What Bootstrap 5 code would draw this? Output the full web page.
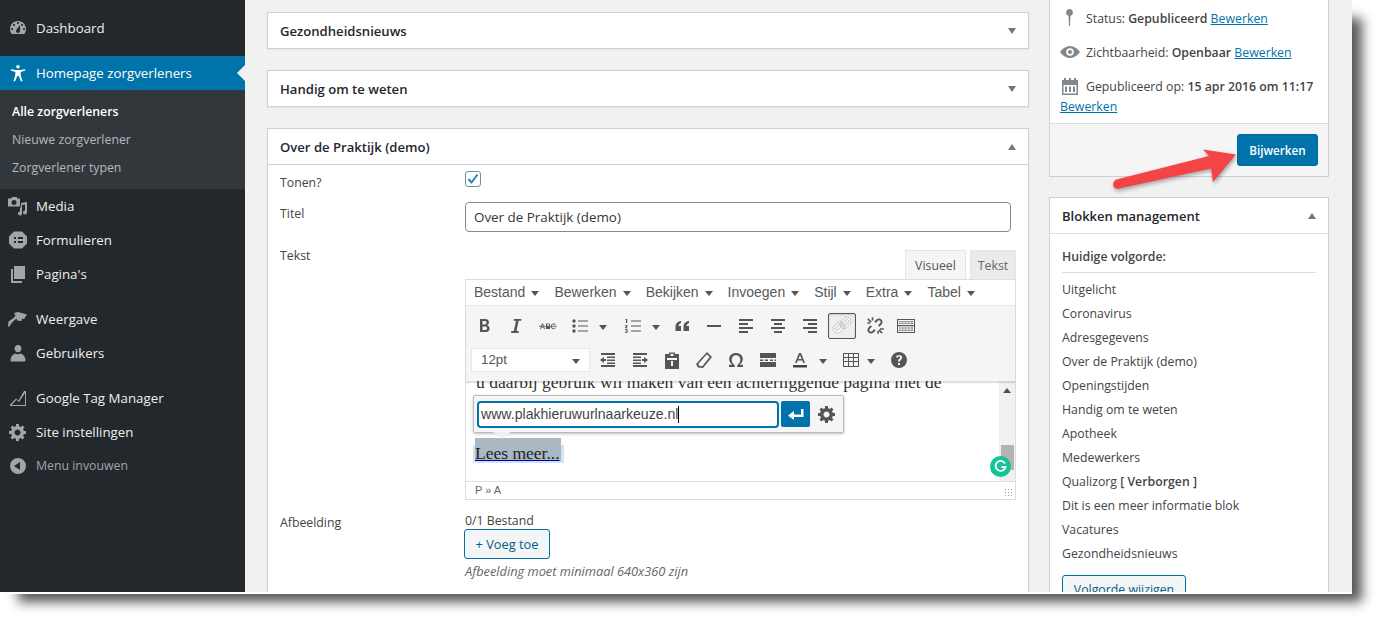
<!DOCTYPE html>
<html lang="nl">
<head>
<meta charset="utf-8">
<title>Homepage zorgverleners</title>
<link href="https://cdn.jsdelivr.net/npm/bootstrap@5.3.0/dist/css/bootstrap.min.css" rel="stylesheet">
<style>
html,body{height:624px;overflow:hidden;background:#fff}
body{font-family:"Open Sans","Noto Sans",sans-serif;font-size:12.3px;line-height:20px;color:#444}
.shot{width:1352px;height:592px;overflow:hidden;background:#f1f1f1;box-shadow:0 2px 0 #fff,14px 14px 11px -4px rgba(0,0,0,.66);position:relative}
.side{width:245px;flex:none;background:#23282d;padding-top:11px;height:592px}
.mi{height:34px;font-size:13.3px;color:#eee;padding-left:8px;gap:8px}
.mi svg{width:20px;height:20px;fill:#a0a5aa;flex:none}
.mi.act{background:#0073aa;color:#fff;position:relative}
.mi.act svg{fill:#fff}
.mi.act::after{content:"";position:absolute;right:0;top:9px;border:8px solid transparent;border-right-color:#f1f1f1;border-left-width:0}
.mi.mute{color:#a0a5aa;font-size:12.3px}
.msep{height:11px}
.sub{background:#32373c;padding:8px 0 7px;height:99px}
.sub div{height:28px;line-height:28px;padding-left:12px;color:#b4b9be;font-size:12.3px}
.sub .on{color:#fff;font-weight:600}
.colm{width:762px;flex:none;margin-left:22px;padding-top:12px}
.colr{width:280px;flex:none;margin-left:20px}
.mbox{background:#fff;border:1px solid #ccd0d4;box-shadow:0 1px 1px rgba(0,0,0,.04);margin-bottom:21px}
.mhead{height:35px;padding:0 12px;font-size:13.1px;font-weight:600;color:#23282d}
.mhead.lined{border-bottom:1px solid #ccd0d4;height:36px}
.tri{width:0;height:0;border-left:4.5px solid transparent;border-right:4.5px solid transparent}
.tri.dn{border-top:6px solid #72777c}
.tri.up{border-bottom:6px solid #72777c}
.frow{display:flex}
.flabel{width:197px;flex:none;padding-left:12px;color:#444}
.chk{width:16px;height:16px;border:1px solid #7e8993;border-radius:3px;background:#fff;display:block}
.chk svg{display:block;width:14px;height:14px}
.tinput{width:546px;height:30px;border:1px solid #7e8993;border-radius:4px;padding:0 8px;font-size:13.4px;line-height:28px;color:#32373c;background:#fff}
.ed{width:551px}
.tabs{height:29px;gap:4px}
.etab{height:29px;padding:0 9px;font-size:12.3px;line-height:30px;border:1px solid #e5e5e5;border-bottom:0;color:#555;background:#f5f5f5;text-align:center}
.etab.off{background:#ebebeb;color:#666;padding:0;width:46px}
.etab.vis{padding:0;width:61px}
.frame{border:1px solid #ddd;background:#fff}
.mbar{height:26px;padding:0 0 2px 8px;background:#fff;font-family:"Liberation Sans",sans-serif;font-size:14px;color:#595959;border-bottom:1px solid #e5e5e5;gap:15px}
.mbar span{display:flex;align-items:center;gap:6px}
.ca{width:0;height:0;border-left:4px solid transparent;border-right:4px solid transparent;border-top:5px solid #555;display:inline-block;margin-top:3px}
.tbar{height:75px;background:#f5f5f5;box-shadow:0 2px 1px rgba(0,0,0,.12);position:relative;z-index:2;padding-top:3px}
.trow{height:34px;display:flex;align-items:center}
.tr1{padding-left:2px}
.tr2{padding-left:5px}
.tb{width:32px;height:26px;display:flex;align-items:center;justify-content:center;flex:none;color:#555;fill:#555}
.tb svg{width:20px;height:20px;fill:#555;display:block}
.tba{width:17px;flex:none;display:flex;align-items:center;justify-content:flex-start;padding-left:3px}
.tba.tight{padding-left:0;width:16px}
.tb.tbtn-on{width:28px;height:26px;border:1px solid #555;border-radius:2px;background:#eee;box-shadow:inset 0 1px 2px rgba(0,0,0,.15);margin-left:2px}
.tb.tbtn-on svg{width:22px;height:22px;fill:#fff;stroke:#999;stroke-width:.5}
.tb.tb30{width:30px}
.tb.tb30 svg{width:22px;height:22px}
.tb.tbg{margin-left:2px}
.fsel{width:119px;height:24px;background:#fff;border:1px solid #e8e8e8;font-family:"Liberation Sans",sans-serif;font-size:13.3px;color:#555;padding:0 9px;margin-right:2px;flex:none}
.econt{height:100px;position:relative;overflow:hidden;font-family:"Liberation Serif",serif;font-size:17.5px;line-height:24px;color:#333;padding:0 10px}
.eline{margin-top:-11px;white-space:nowrap}
.scroll{position:absolute;right:0;top:0;bottom:0;width:16px;background:#f1f1f1}
.sthumb{position:absolute;left:2px;top:64px;width:13px;height:25px;background:#b4b4b4}
.sup{position:absolute;left:4px;top:7px;width:0;height:0;border-left:4px solid transparent;border-right:4px solid transparent;border-bottom:5px solid #505050}
.gram{position:absolute;left:524px;top:75px;width:21px;height:21px;border-radius:50%;background:#15c39a;display:flex;align-items:center;justify-content:center}
.lnkpop{position:absolute;left:7px;top:14px;width:371px;height:38px;background:#f5f5f5;border:1px solid #bbb;border-radius:2px;box-shadow:0 1px 3px rgba(0,0,0,.25);padding:5px 3px;gap:2px;z-index:3;font-family:"Liberation Sans",sans-serif}
.lnkpop::after{content:"";position:absolute;left:19px;top:36px;border:9px solid transparent;border-top:7px solid #f0f0f0;border-bottom:0}
.lnkin{width:302px;height:27px;border:2px solid #0073aa;border-radius:4px;background:#fff;padding:0 2px;line-height:23px;font-size:14.1px;color:#444;flex:none}
.caret{display:inline-block;width:1px;height:17px;background:#000;vertical-align:-4px}
.lnkgo{width:29px;height:26px;background:#0073aa;border-radius:2px;flex:none}
.lnkgo svg{width:20px;height:20px;fill:#fff}
.lnkgear{width:30px;height:26px;flex:none}
.lnkgear svg{width:20px;height:20px;fill:#555}
.sel{position:absolute;left:7px;top:64px;height:18px;width:91px;background:#cfe3f7}
.selg{position:absolute;left:9px;top:57px;width:86px;height:23px;background:#aab8c3}
.sela{position:absolute;left:9px;top:60px;color:#222;text-decoration:underline;text-decoration-color:#00a;line-height:24px}
.estat{height:18px;border-top:1px solid #e0e0e0;background:#fff;font-family:"Liberation Sans",sans-serif;font-size:11px;line-height:17px;color:#666;padding:0 9px;position:relative}
.grip{position:absolute;right:2px;bottom:2px;width:9px;height:9px;background-image:radial-gradient(#999 .8px,transparent .9px);background-size:3px 3px}
.addb{display:inline-block;height:30px;width:86px;border:1px solid #0071a1;border-radius:3px;background:#f3f5f6;color:#016087;font-size:12.8px;line-height:28px;text-align:center;margin-left:-1px;vertical-align:top}
.help{font-style:italic;color:#666;font-size:12.8px;line-height:20px;margin-top:2px}
.pub{background:#fff;border:1px solid #ccd0d4;border-top:0;margin-bottom:20px}
.prow{padding:0 10px;margin-bottom:13px;color:#444}
.prow svg{width:20px;height:20px;fill:#82878c;display:inline-block;vertical-align:-5px;margin-right:6px}
.prow a{color:#0073aa;text-decoration:underline}
.pfoot{height:53px;border-top:1px solid #ddd;background:#f5f5f5;padding:10px 10px 0 0}
.upd{width:81px;height:32px;background:#0073aa;border-radius:3px;color:#fff;font-size:11.7px;font-weight:600;border:1px solid #006799}
.bhead{height:36px;padding:0 12px;font-size:13px;font-weight:600;color:#23282d;border-bottom:1px solid #ddd}
.bbody{padding:13px 12px 0}
.btitle{font-weight:600;color:#444;padding-bottom:5px;border-bottom:1px solid #ddd;margin-bottom:5px}
.bli{height:24px;line-height:24px;color:#444}
.volg{display:inline-block;width:124px;height:30px;border:1px solid #0071a1;border-radius:3px;background:#f3f5f6;color:#016087;line-height:28px;text-align:center;margin-top:9px}
.pijl{position:absolute;left:1105px;top:140px;width:140px;height:58px;overflow:visible;filter:drop-shadow(1px 2px 2px rgba(0,0,0,.35))}
.r1{height:37px;padding-top:6px}
.r1 .flabel{padding-top:2px}
.r2{height:43px}
.r2 .flabel{padding-top:2px}
.r3{padding-bottom:10px}
.r3 .flabel{padding-top:1px}
.r3 .ed{padding-top:5px}
.r4{padding-bottom:40px}
.r4 .flabel{padding-top:3px}
.blok{border:1px solid #ccd0d4}
.lastp{margin-bottom:6px}
.ptop{padding-top:8px}
.bst{line-height:19px;padding-top:1px;margin-bottom:-1px}
</style>
</head>
<body>
<div class="shot d-flex">
  <aside class="side">
    <div class="mi d-flex align-items-center"><svg viewBox="0 0 20 20"><path d="M3.76 16h12.48c1.1-1.37 1.76-3.11 1.76-5 0-4.42-3.58-8-8-8s-8 3.58-8 8c0 1.89.66 3.63 1.76 5zM10 4c.55 0 1 .45 1 1s-.45 1-1 1-1-.45-1-1 .45-1 1-1zM6 6c.55 0 1 .45 1 1s-.45 1-1 1-1-.45-1-1 .45-1 1-1zm8 0c.55 0 1 .45 1 1s-.45 1-1 1-1-.45-1-1 .45-1 1-1zm-5.37 5.55L12 7v6c0 1.1-.9 2-2 2s-2-.9-2-2c0-.57.24-1.08.63-1.45zM4 10c.55 0 1 .45 1 1s-.45 1-1 1-1-.45-1-1 .45-1 1-1zm12 0c.55 0 1 .45 1 1s-.45 1-1 1-1-.45-1-1 .45-1 1-1z"/></svg><span>Dashboard</span></div>
    <div class="msep"></div>
    <div class="mi act d-flex align-items-center"><svg viewBox="0 0 20 20"><path d="M10 2a1.8 1.8 0 1 1 0 3.6A1.8 1.8 0 0 1 10 2zM3 6.200l4.900.8h4.200l4.900-.8.3 1.400-4.600 1.500v2.900l1.800 6-1.500.5-2.300-5.500h-1.400l-2.300 5.500-1.500-.5 1.800-6V9.100L2.700 7.600z"/></svg><span>Homepage zorgverleners</span></div>
    <div class="sub"><div class="on">Alle zorgverleners</div><div>Nieuwe zorgverlener</div><div>Zorgverlener typen</div></div>
    <div class="mi d-flex align-items-center"><svg viewBox="0 0 20 20"><path d="M0 2.500h3l1-1.500h4.500l1 1.500H12v8H0zm6 6.500a2.500 2.500 0 1 0 0-5 2.500 2.500 0 0 0 0 5z" fill-rule="evenodd"/><path d="M19 6v10.500a2 2 0 1 1-2-2V8.500l-3 .6V17.500a2 2 0 1 1-2-2v-4h1V7z"/></svg><span>Media</span></div>
    <div class="mi d-flex align-items-center"><svg viewBox="0 0 20 20"><path fill-rule="evenodd" d="M6 1.500h8l5 5v7l-5 5H6l-5-5v-7zM6 7v2h2V7zm4 0v2h5V7zm-4 4v2h2v-2zm4 0v2h5v-2z"/></svg><span>Formulieren</span></div>
    <div class="mi d-flex align-items-center"><svg viewBox="0 0 20 20"><path d="M6 2h11v13H6z"/><path d="M3 5h2v12h9v2H3z"/></svg><span>Pagina's</span></div>
    <div class="msep"></div>
    <div class="mi d-flex align-items-center"><svg viewBox="0 0 20 20"><path d="M6 4l4-1 9 2.500-3 4.500-2-.5-.5 2.500-4.500-.5-.5-2-4.500 4L1 18l-1-1 .5-4.500 5-3.500 2-2.500z"/></svg><span>Weergave</span></div>
    <div class="mi d-flex align-items-center"><svg viewBox="0 0 20 20"><path d="M10 9.300c2 0 3.400-1.800 3.400-3.900S12 2 10 2 6.600 3.300 6.600 5.400s1.400 3.900 3.400 3.900zM2.500 17.600c0-3.700 2-6.200 5-7 .7.500 1.600.8 2.500.8s1.800-.3 2.500-.8c3 .8 5 3.300 5 7 0 .5-.5.900-1 .9H3.500c-.5 0-1-.4-1-.9z"/></svg><span>Gebruikers</span></div>
    <div class="msep"></div>
    <div class="mi d-flex align-items-center"><svg viewBox="0 0 20 20"><path d="M2 18v-1.500l6-6 2.500 2L16 3h2v15zm1.500-1H17V5l-6 9-2.500-2.200z" fill-rule="evenodd"/></svg><span>Google Tag Manager</span></div>
    <div class="mi d-flex align-items-center"><svg viewBox="0 0 20 20"><path d="M18 12h-2.180c-.17.7-.44 1.350-.81 1.930l1.540 1.540-2.100 2.100-1.540-1.540c-.58.36-1.230.63-1.910.79V19H8v-2.180c-.68-.16-1.330-.43-1.910-.79l-1.540 1.540-2.120-2.120 1.540-1.540c-.36-.58-.63-1.230-.79-1.910H1V9.030h2.170c.16-.7.44-1.350.8-1.940L2.430 5.550l2.100-2.100 1.540 1.540c.58-.37 1.240-.64 1.930-.81V2h3v2.180c.68.16 1.330.43 1.910.79l1.540-1.540 2.120 2.120-1.540 1.540c.36.59.64 1.240.8 1.940H18V12zm-8.500 1.500c1.660 0 3-1.340 3-3s-1.340-3-3-3-3 1.340-3 3 1.340 3 3 3z"/></svg><span>Site instellingen</span></div>
    <div class="mi mute d-flex align-items-center"><svg viewBox="0 0 20 20"><path fill-rule="evenodd" d="M10 2a8 8 0 1 1 0 16 8 8 0 0 1 0-16zm2 4l-6 4 6 4z"/></svg><span>Menu invouwen</span></div>
  </aside>

  <main class="colm">
    <section class="mbox"><div class="mhead d-flex align-items-center justify-content-between"><span>Gezondheidsnieuws</span><span class="tri dn"></span></div></section>
    <section class="mbox"><div class="mhead d-flex align-items-center justify-content-between"><span>Handig om te weten</span><span class="tri dn"></span></div></section>
    <section class="mbox">
      <div class="mhead lined d-flex align-items-center justify-content-between"><span>Over de Praktijk (demo)</span><span class="tri up"></span></div>
      <div class="frow r1"><div class="flabel">Tonen?</div><div><span class="chk"><svg viewBox="0 0 14 14"><path d="M2.500 7l3 3.500 6-8" fill="none" stroke="#1e8cbe" stroke-width="2"/></svg></span></div></div>
      <div class="frow r2"><div class="flabel">Titel</div><div class="tinput">Over de Praktijk (demo)</div></div>
      <div class="frow r3"><div class="flabel">Tekst</div>
        <div class="ed">
          <div class="tabs d-flex justify-content-end"><div class="etab vis">Visueel</div><div class="etab off">Tekst</div></div>
          <div class="frame">
            <div class="mbar d-flex align-items-center"><span>Bestand <i class="ca"></i></span><span>Bewerken <i class="ca"></i></span><span>Bekijken <i class="ca"></i></span><span>Invoegen <i class="ca"></i></span><span>Stijl <i class="ca"></i></span><span>Extra <i class="ca"></i></span><span>Tabel <i class="ca"></i></span></div>
            <div class="tbar">
              <div class="trow tr1">
                <div class="tb"><svg viewBox="0 0 20 20"><path fill-rule="evenodd" d="M6 3h5c2.500 0 4 1.200 4 3.300 0 1.400-.8 2.400-2 2.900 1.600.4 2.600 1.500 2.600 3.200 0 2.400-1.800 3.600-4.400 3.600H6zm2.500 2.100v3.300h2c1.300 0 2-.6 2-1.700s-.7-1.600-2-1.600zm0 5.300V14h2.300c1.500 0 2.300-.6 2.300-1.800s-.8-1.800-2.300-1.800z"/></svg></div>
                <div class="tb"><svg viewBox="0 0 20 20"><path d="M8 3h7.500l-.4 1.800h-2.500L10.500 15h2.300l-.4 2H5l.4-2h2.400L10 4.800H7.600z"/></svg></div>
                <div class="tb"><svg viewBox="0 0 20 20"><path d="M2 13l2-5.500h1L7 13H6l-.5-1.400H3.400L3 13zm1.700-2.200h1.600L4.500 8.600zM8 7.500h2.500c1 0 1.600.5 1.600 1.300 0 .6-.2.900-.7 1.100.6.200 1 .6 1 1.300 0 1.100-.7 1.800-1.900 1.800H8zm.9.800V10h1.400c.6 0 .9-.3.900-.9s-.3-.8-.9-.8zm4.100 2c0-1.700 1-2.900 2.500-2.900 1 0 1.800.5 2.200 1.400l-.8.300c-.3-.6-.8-.9-1.400-.9-1 0-1.600.9-1.600 2.100s.6 2.100 1.600 2.100c.6 0 1.100-.3 1.400-.9l.8.300c-.4.900-1.200 1.400-2.200 1.400-1.500 0-2.500-1.200-2.500-2.900z"/><rect x="1" y="9.800" width="18" height=".8"/></svg></div>
                <div class="tb"><svg viewBox="0 0 20 20"><circle cx="4" cy="5" r="1.700"/><circle cx="4" cy="10" r="1.700"/><circle cx="4" cy="15" r="1.700"/><path d="M8 4.500h10v1H8zm0 5h10v1H8zm0 5h10v1H8z"/></svg></div>
                <div class="tba"><i class="ca"></i></div>
                <div class="tb ms-1"><svg viewBox="0 0 20 20"><path d="M3 3h1.200v4H3V4H2zM2 9h2.500v1l-1.300 1.500h1.300v.7H2v-.8l1.500-1.700H2zm0 4h2.500v4H2v-.7h1.600v-.9H2.500v-.6h1.100v-1H2zM8 4.500h10v1H8zm0 5h10v1H8zm0 5h10v1H8z"/></svg></div>
                <div class="tba"><i class="ca"></i></div>
                <div class="tb"><svg viewBox="0 0 20 20"><path d="M9 5v2C7.500 7.500 6.500 8.500 6.500 10H9v5H3.500v-4.500C3.500 7.500 6 5.300 9 5zm8 0v2c-1.500.5-2.500 1.500-2.500 3H17v5h-5.500v-4.500c0-3 2.500-5.200 5.500-5.500z"/></svg></div>
                <div class="tb"><svg viewBox="0 0 20 20"><rect x="3" y="9" width="14" height="2"/></svg></div>
                <div class="tb"><svg viewBox="0 0 20 20"><path d="M3 3h14v2H3zm0 4h9v2H3zm0 4h14v2H3zm0 4h9v2H3z"/></svg></div>
                <div class="tb"><svg viewBox="0 0 20 20"><path d="M3 3h14v2H3zm3 4h8v2H6zm-3 4h14v2H3zm3 4h8v2H6z"/></svg></div>
                <div class="tb"><svg viewBox="0 0 20 20"><path d="M3 3h14v2H3zm5 4h9v2H8zm-5 4h14v2H3zm5 4h9v2H8z"/></svg></div>
                <div class="tb tbtn-on"><svg viewBox="0 0 20 20"><path d="M17 3c1.600 1.600 1.600 4 0 5.600l-2.400 2.400c-1.300 1.300-3.200 1.500-4.700.7l1.600-1.600c.7.100 1.400-.1 1.900-.6l2.400-2.400c.7-.7.7-1.800 0-2.500s-1.800-.7-2.500 0L10.900 7c-.5.500-.7 1.200-.6 1.900l-1.600 1.600c-.8-1.500-.6-3.400.7-4.700L11.800 3.400C13.400 1.800 15.400 1.400 17 3zM11.800 8.200c.8 1.500.6 3.400-.7 4.700l-2.400 2.400c-1.600 1.600-4 1.600-5.600 0s-1.600-4 0-5.600L5.500 7.300c1.300-1.300 3.200-1.500 4.700-.7L8.600 8.200c-.7-.1-1.400.1-1.900.6l-2.400 2.400c-.7.700-.7 1.800 0 2.500s1.800.7 2.500 0l2.400-2.400c.5-.5.700-1.200.6-1.900z"/></svg></div>
                <div class="tb tb30 ms-1"><svg viewBox="0 0 20 20"><path d="M15.900 4.100c1.300 1.300 1.300 3.300 0 4.600L14 10.600l-1.200-1.200 1.900-1.900c.6-.6.600-1.600 0-2.200s-1.600-.6-2.200 0l-1.900 1.900L9.400 6l1.900-1.900c1.300-1.300 3.300-1.300 4.600 0zM4.100 15.900c-1.300-1.300-1.300-3.300 0-4.600L6 9.400l1.200 1.200-1.900 1.900c-.6.600-.6 1.600 0 2.200s1.600.6 2.200 0l1.900-1.900 1.200 1.200-1.900 1.900c-1.300 1.300-3.300 1.300-4.600 0zM4 3l3 3-1 1-3-3zm12 14l-3-3 1-1 3 3zM3 8V6.500h2.500V8zm9 9v-2.500h1.500V17zM7 2h1.500v3H7zm7.500 10H18v1.500h-3.500z"/></svg></div>
                <div class="tb"><svg viewBox="0 0 20 20"><path fill-rule="evenodd" d="M1 3h18v14H1zm1 1v12h16V4z"/><path d="M1 9h18v1.200H1z"/><path d="M3 5.300h14v1H3zM3 7.200h14v.8H3zM3 11.500h14v1H3zM3 13.800h14v1H3z" stroke="#f5f5f5" stroke-width=".0"/><path d="M5 5v3.500M8 5v3.500M11 5v3.500M14 5v3.500M5 11v4M8 11v4M11 11v4M14 11v4" stroke="#f5f5f5" stroke-width=".8" fill="none"/></svg></div>
              </div>
              <div class="trow tr2">
                <div class="fsel d-flex align-items-center justify-content-between"><span>12pt</span><i class="ca"></i></div>
                <div class="tb"><svg viewBox="0 0 20 20"><path d="M3 3h14v2H3zm6 3.500h8v1.500H9zm0 3h8V11H9zm0 3h8V14H9zM3 15h14v2H3zM2 10l4-3v2h2v2H6v2z"/></svg></div>
                <div class="tb"><svg viewBox="0 0 20 20"><path d="M3 3h14v2H3zm0 3.500h8V8H3zm0 3h8V11H3zm0 3h8V14H3zM3 15h14v2H3zm15-5l-4-3v2h-2v2h2v2z"/></svg></div>
                <div class="tb"><svg viewBox="0 0 20 20"><path fill-rule="evenodd" d="M3 4h4V2.500h6V4h4v15H3zm5.500-.2V6h3V3.800zM5 8v2h10V8zm4 3v5h2v-5z"/></svg></div>
                <div class="tb"><svg viewBox="0 0 20 20"><path fill-rule="evenodd" d="M13 2l5 5-9 11-5-.5L2 14zM12.900 4.300L4.200 14l1.300 2.100 2.800.2 7.400-9.300z"/></svg></div>
                <div class="tb"><svg viewBox="0 0 20 20"><path d="M10 3c3.900 0 6.800 2.500 6.800 6 0 2.500-1.300 4.400-3.300 5.800H17V17h-5.700v-2.100c1.900-1.100 3-3 3-5.400 0-2.500-1.700-4.300-4.300-4.300s-4.300 1.800-4.300 4.300c0 2.400 1.100 4.300 3 5.400V17H3v-2.200h3.500C4.500 13.400 3.200 11.500 3.200 9c0-3.500 2.900-6 6.800-6z"/></svg></div>
                <div class="tb"><svg viewBox="0 0 20 20"><path d="M2 3h16v5H2zm0 9h16v5H2zM2 9.500h3.500v1.500H2zm5 0h3v1.500H7zm5 0h3v1.500h-3zm4.500 0H18v1.500h-1.500z"/></svg></div>
                <div class="tb"><svg viewBox="0 0 20 20"><path fill-rule="evenodd" d="M9 3h2l4 10h-1.800l-.9-2.500H7.700L6.800 13H5zm1 2.200L8.300 9h3.400z"/><rect x="3" y="15" width="14" height="2.500" fill="#444"/></svg></div>
                <div class="tba"><i class="ca"></i></div>
                <div class="tb tbg"><svg viewBox="0 0 20 20"><path fill-rule="evenodd" d="M2 3h16v14H2zm1 1v3h4V4zm5 0v3h4V4zm5 0v3h4V4zM3 8v3h4V8zm5 0v3h4V8zm5 0v3h4V8zM3 12v4h4v-4zm5 0v4h4v-4zm5 0v4h4v-4z"/></svg></div>
                <div class="tba tight"><i class="ca"></i></div>
                <div class="tb"><svg viewBox="0 0 20 20"><path fill-rule="evenodd" d="M10 2a8 8 0 1 1 0 16 8 8 0 0 1 0-16zm-1 11v2h2v-2zM10 5C8.200 5 7 6 7 7.500h1.800c0-.6.500-1 1.200-1s1.200.4 1.200 1c0 1.200-2.200 1.300-2.200 4h2c0-1.700 2.200-2 2.200-4.200C13 5.900 11.800 5 10 5z"/></svg></div>
              </div>
            </div>
            <div class="econt">
              <div class="eline">u daarbij gebruik wil maken van een achterliggende pagina met de</div>
              <div class="scroll"><span class="sup"></span><span class="sthumb"></span></div>
              <div class="sel"></div><div class="selg"></div>
              <div class="sela">Lees meer...</div>
              <div class="lnkpop d-flex align-items-start">
                <div class="lnkin">www.plakhieruwurlnaarkeuze.nl<i class="caret"></i></div>
                <div class="lnkgo d-flex align-items-center justify-content-center"><svg viewBox="0 0 20 20"><path d="M15 5h2.500v8H8v3l-6-4.500L8 7v3.500h7z"/></svg></div>
                <div class="lnkgear d-flex align-items-center justify-content-center"><svg viewBox="0 0 20 20"><path d="M18 12h-2.180c-.17.7-.44 1.350-.81 1.930l1.540 1.540-2.100 2.100-1.540-1.540c-.58.36-1.230.63-1.910.79V19H8v-2.180c-.68-.16-1.330-.43-1.910-.79l-1.540 1.540-2.120-2.120 1.540-1.540c-.36-.58-.63-1.230-.79-1.910H1V9.030h2.170c.16-.7.44-1.350.8-1.940L2.430 5.550l2.100-2.100 1.540 1.540c.58-.37 1.240-.64 1.930-.81V2h3v2.180c.68.16 1.330.43 1.910.79l1.540-1.540 2.120 2.120-1.540 1.540c.36.59.64 1.240.8 1.940H18V12zm-8.500 1.500c1.660 0 3-1.340 3-3s-1.340-3-3-3-3 1.340-3 3 1.340 3 3 3z"/></svg></div>
              </div>
              <div class="gram"><svg width="13" height="13" viewBox="0 0 13 13"><path d="M11 3.500A5 5 0 1 0 11.500 7H7.500" fill="none" stroke="#fff" stroke-width="1.800"/></svg></div>
            </div>
            <div class="estat">P » A<span class="grip"></span></div>
          </div>
        </div>
      </div>
      <div class="frow r4"><div class="flabel">Afbeelding</div><div><div class="bst">0/1 Bestand</div><span class="addb">+ Voeg toe</span><div class="help">Afbeelding moet minimaal 640x360 zijn</div></div></div>
    </section>
  </main>

  <aside class="colr">
    <section class="pub">
      <div class="ptop">
        <div class="prow"><svg viewBox="0 0 20 20"><path fill-rule="evenodd" d="M9.500 1a3.500 3.500 0 0 1 1 6.800l-.5 10.200H9L8.500 7.800A3.500 3.500 0 0 1 9.500 1z"/></svg>Status: <b class="fw-semibold">Gepubliceerd</b> <a href="#">Bewerken</a></div>
        <div class="prow"><svg viewBox="0 0 20 20"><path fill-rule="evenodd" d="M10 4c4 0 7.500 2.500 10 6-2.500 3.500-6 6-10 6S2.500 13.500 0 10c2.500-3.500 6-6 10-6zm0 2.200a3.800 3.800 0 1 0 0 7.600 3.800 3.800 0 0 0 0-7.600zM10 8a2 2 0 1 1 0 4 2 2 0 0 1 0-4z"/></svg>Zichtbaarheid: <b class="fw-semibold">Openbaar</b> <a href="#">Bewerken</a></div>
        <div class="prow lastp"><svg viewBox="0 0 20 20"><path fill-rule="evenodd" d="M2 4h2V2h2v2h3V2h2v2h3V2h2v2h2v15H2zm1.500 5v8.500h13V9zM5 10.500h2V16H5zm4 0h2V16H9zm4 0h2V16h-2z"/></svg>Gepubliceerd op: <b class="fw-semibold">15 apr 2016 om 11:17</b> <a href="#">Bewerken</a></div>
      </div>
      <div class="pfoot d-flex justify-content-end align-items-start"><button class="upd" type="button">Bijwerken</button></div>
    </section>
    <section class="blok bg-white">
      <div class="bhead d-flex align-items-center justify-content-between"><span>Blokken management</span><span class="tri up"></span></div>
      <div class="bbody">
        <div class="btitle">Huidige volgorde:</div>
        <div class="bli">Uitgelicht</div>
        <div class="bli">Coronavirus</div>
        <div class="bli">Adresgegevens</div>
        <div class="bli">Over de Praktijk (demo)</div>
        <div class="bli">Openingstijden</div>
        <div class="bli">Handig om te weten</div>
        <div class="bli">Apotheek</div>
        <div class="bli">Medewerkers</div>
        <div class="bli">Qualizorg <b class="fw-semibold">[ Verborgen ]</b></div>
        <div class="bli">Dit is een meer informatie blok</div>
        <div class="bli">Vacatures</div>
        <div class="bli">Gezondheidsnieuws</div>
        <span class="volg">Volgorde wijzigen</span>
      </div>
    </section>
  </aside>

  <svg class="pijl" viewBox="0 0 140 58"><path d="M11.500 39.500L104 16l-6-6.500 33 5-23 27.500-2-13.500L14 48.500c-3 .7-5.500-.5-5.800-3.500-.2-2.500 1-4.700 3.300-5.500z" fill="#f44446"/></svg>
</div>
</body>
</html>
